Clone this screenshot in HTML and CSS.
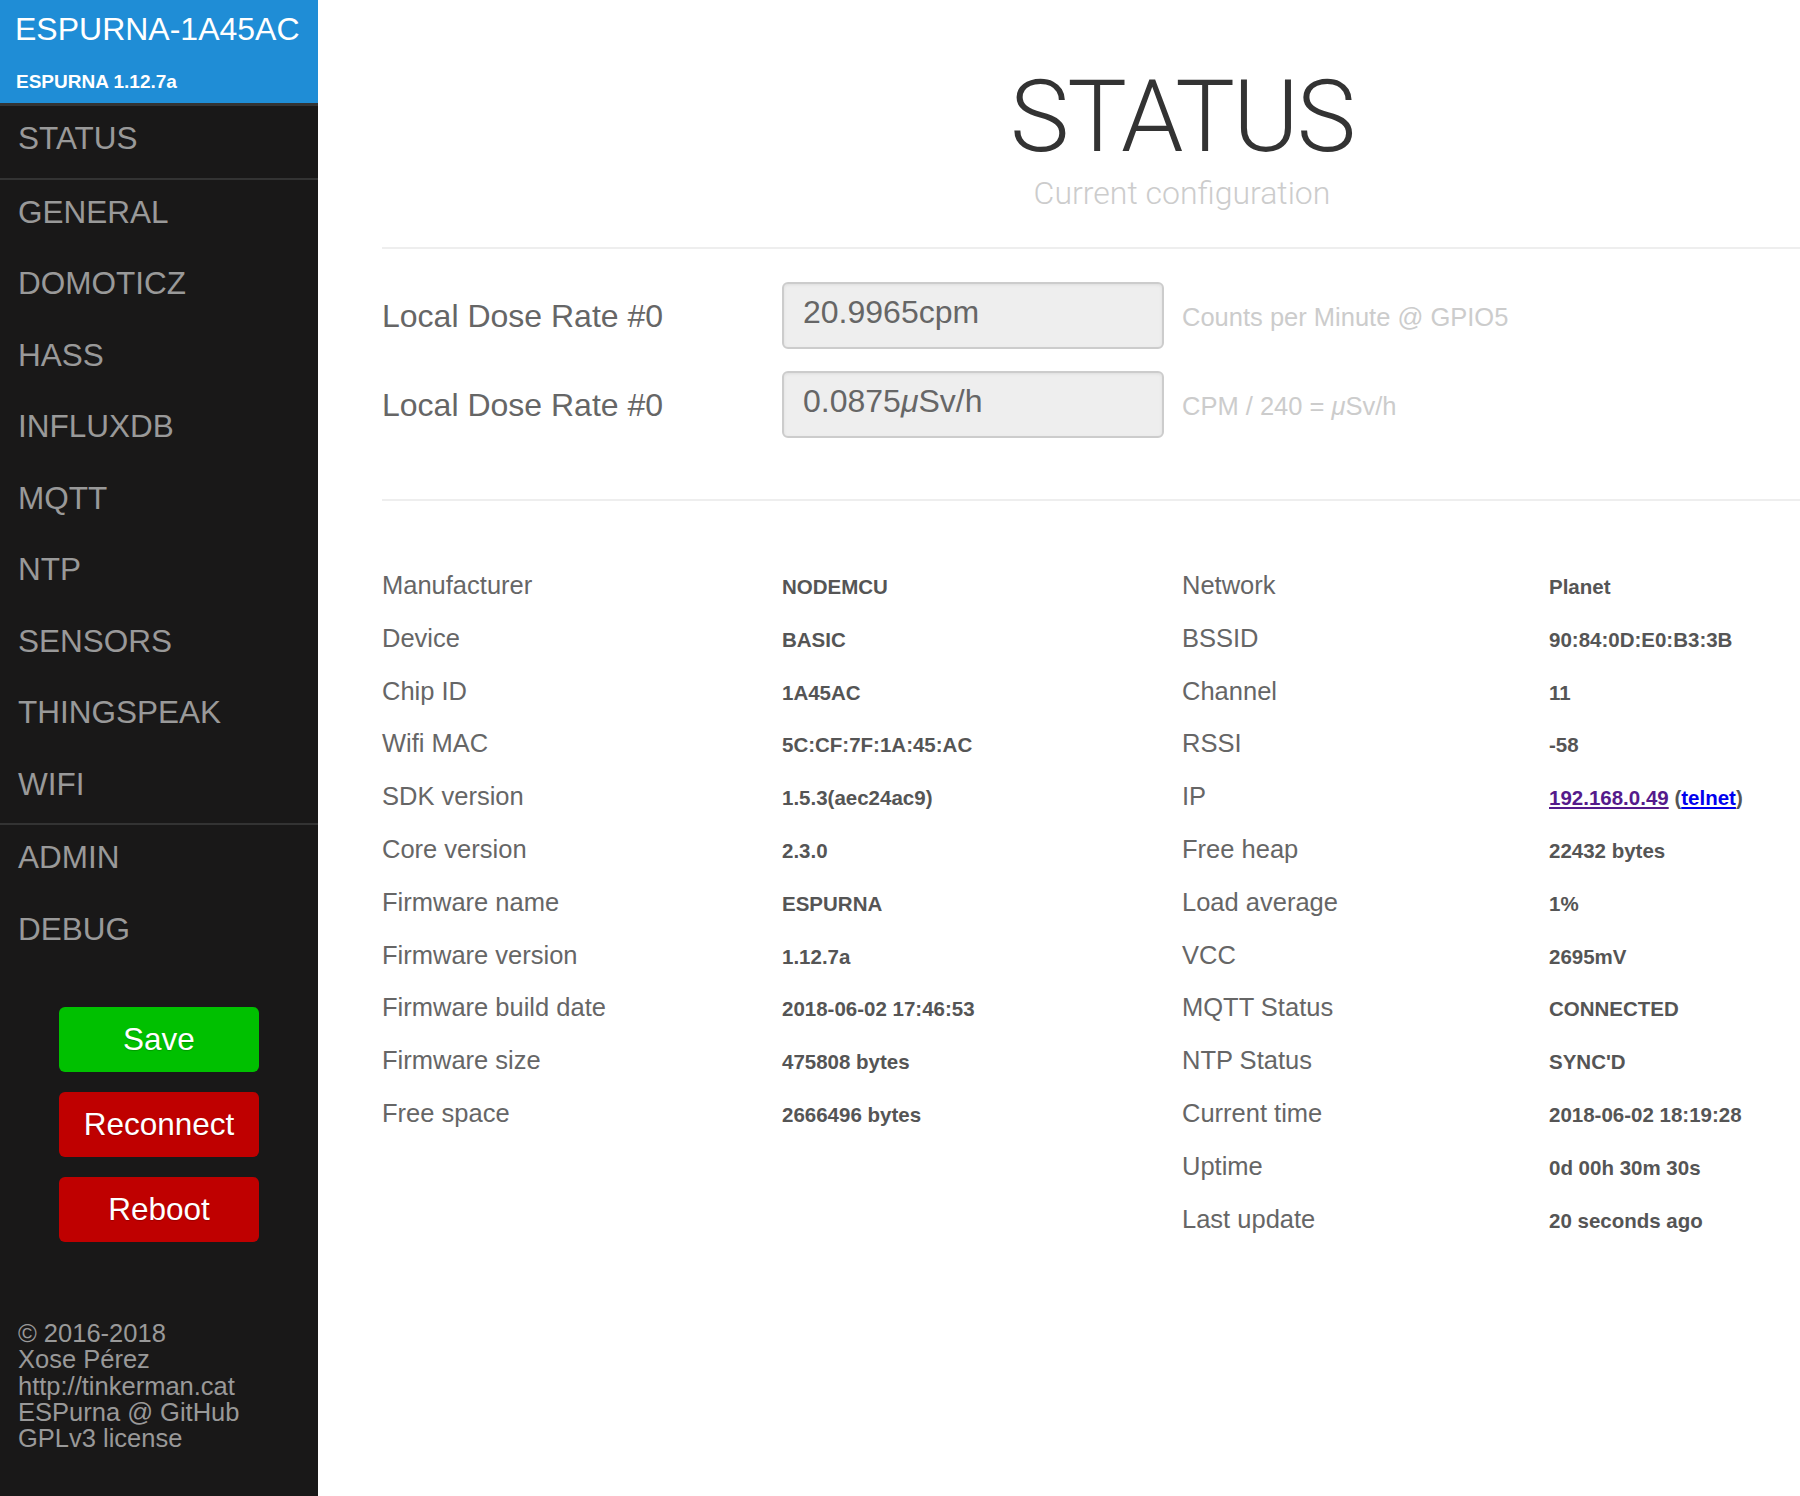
FILE: index.html
```html
<!DOCTYPE html>
<html lang="en">
<head>
<meta charset="utf-8">
<title>ESPurna - STATUS</title>
<link rel="stylesheet" href="styles.css">
</head>
<body>
<div class="layout">
  <aside class="menu">
    <div class="brand">
      <div class="brand-title">ESPURNA-1A45AC</div>
      <div class="brand-sub">ESPURNA 1.12.7a</div>
    </div>
    <ul class="nav">
      <li class="nav-item">STATUS</li>
    </ul>
    <ul class="nav nav-sep">
      <li class="nav-item">GENERAL</li>
      <li class="nav-item">DOMOTICZ</li>
      <li class="nav-item">HASS</li>
      <li class="nav-item">INFLUXDB</li>
      <li class="nav-item">MQTT</li>
      <li class="nav-item">NTP</li>
      <li class="nav-item">SENSORS</li>
      <li class="nav-item">THINGSPEAK</li>
      <li class="nav-item">WIFI</li>
    </ul>
    <ul class="nav nav-sep">
      <li class="nav-item">ADMIN</li>
      <li class="nav-item">DEBUG</li>
    </ul>
    <div class="actions">
      <button class="btn btn-save">Save</button>
      <button class="btn btn-red">Reconnect</button>
      <button class="btn btn-red">Reboot</button>
    </div>
    <div class="footer">
      <div>© 2016-2018</div>
      <div>Xose Pérez</div>
      <div>http://tinkerman.cat</div>
      <div>ESPurna @ GitHub</div>
      <div>GPLv3 license</div>
    </div>
  </aside>
  <main class="main">
    <div class="content">
      <header class="header">
        <h1 class="title">STATUS</h1>
        <h2 class="subtitle">Current configuration</h2>
      </header>
      <hr class="rule">
      <section class="magnitudes">
        <div class="mag-row">
          <label class="mag-label">Local Dose Rate #0</label>
          <div class="mag-input">20.9965cpm</div>
          <span class="mag-hint">Counts per Minute @ GPIO5</span>
        </div>
        <div class="mag-row">
          <label class="mag-label">Local Dose Rate #0</label>
          <div class="mag-input">0.0875<i>μ</i>Sv/h</div>
          <span class="mag-hint">CPM / 240 = <i>μ</i>Sv/h</span>
        </div>
      </section>
      <hr class="rule rule-2">
      <section class="status">
        <div class="status-col status-left">
          <div class="k">Manufacturer</div><div class="v">NODEMCU</div>
          <div class="k">Device</div><div class="v">BASIC</div>
          <div class="k">Chip ID</div><div class="v">1A45AC</div>
          <div class="k">Wifi MAC</div><div class="v">5C:CF:7F:1A:45:AC</div>
          <div class="k">SDK version</div><div class="v">1.5.3(aec24ac9)</div>
          <div class="k">Core version</div><div class="v">2.3.0</div>
          <div class="k">Firmware name</div><div class="v">ESPURNA</div>
          <div class="k">Firmware version</div><div class="v">1.12.7a</div>
          <div class="k">Firmware build date</div><div class="v">2018-06-02 17:46:53</div>
          <div class="k">Firmware size</div><div class="v">475808 bytes</div>
          <div class="k">Free space</div><div class="v">2666496 bytes</div>
        </div>
        <div class="status-col status-right">
          <div class="k">Network</div><div class="v">Planet</div>
          <div class="k">BSSID</div><div class="v">90:84:0D:E0:B3:3B</div>
          <div class="k">Channel</div><div class="v">11</div>
          <div class="k">RSSI</div><div class="v">-58</div>
          <div class="k">IP</div><div class="v"><a class="visited" href="#ip">192.168.0.49</a> (<a class="link" href="#telnet">telnet</a>)</div>
          <div class="k">Free heap</div><div class="v">22432 bytes</div>
          <div class="k">Load average</div><div class="v">1%</div>
          <div class="k">VCC</div><div class="v">2695mV</div>
          <div class="k">MQTT Status</div><div class="v">CONNECTED</div>
          <div class="k">NTP Status</div><div class="v">SYNC'D</div>
          <div class="k">Current time</div><div class="v">2018-06-02 18:19:28</div>
          <div class="k">Uptime</div><div class="v">0d 00h 30m 30s</div>
          <div class="k">Last update</div><div class="v">20 seconds ago</div>
        </div>
      </section>
    </div>
  </main>
</div>
</body>
</html>
```

FILE: styles.css
```css
html, body {
  margin: 0;
  padding: 0;
  background: #fff;
  font-family: "Liberation Sans", Arial, Helvetica, sans-serif;
}

body {
  width: 1800px;
  height: 1496px;
  overflow: hidden;
}

.layout {
  display: flex;
  height: 1496px;
}

/* ---------- sidebar ---------- */
.menu {
  width: 318px;
  flex: 0 0 318px;
  background: #191818;
  display: flex;
  flex-direction: column;
}

.brand {
  background: #1f8dd6;
  height: 92px;
  padding: 11px 15px 0 15px;
  color: #fff;
  border-bottom: 3px solid #333;
}

.brand-title {
  font-size: 32px;
  line-height: 36px;
  white-space: nowrap;
}

.brand-sub {
  margin-top: 24px;
  font-size: 19px;
  line-height: 22px;
  font-weight: bold;
  padding-left: 1px;
}

.nav {
  list-style: none;
  margin: 0;
  padding: 0;
}

.nav-sep {
  border-top: 2px solid #333;
}

.nav-item {
  color: #999;
  font-size: 31.5px;
  line-height: 36px;
  padding: 14px 0 21.5px 18px;
}

.actions {
  margin-top: 39px;
  display: flex;
  flex-direction: column;
  align-items: center;
  gap: 20px;
}

.btn {
  width: 200px;
  height: 65px;
  border: none;
  border-radius: 6px;
  color: #fff;
  font-family: "Liberation Sans", Arial, Helvetica, sans-serif;
  font-size: 31.5px;
  padding: 0;
  text-shadow: 0 1px 1px rgba(0, 0, 0, 0.2);
}

.btn-save {
  background: #00c000;
}

.btn-red {
  background: #bf0000;
}

.footer {
  margin-top: 78px;
  padding-left: 18px;
  color: #999;
  font-size: 25.5px;
  line-height: 26.3px;
}

/* ---------- main ---------- */
.main {
  flex: 1 1 auto;
  overflow: hidden;
}

.content {
  width: 1600px;
  padding-left: 64px;
}

.header {
  text-align: center;
  padding-top: 67px;
}

.title {
  margin: 0;
  font-family: Roboto, "Liberation Sans", sans-serif;
  font-weight: 300;
  font-size: 100px;
  line-height: 100px;
  letter-spacing: -2px;
  color: #333;
}

.subtitle {
  margin: 6px 0 0 0;
  font-family: Roboto, "Liberation Sans", sans-serif;
  font-weight: 300;
  font-size: 32px;
  line-height: 40px;
  color: #ccc;
}

.rule {
  border: none;
  border-top: 2px solid #eee;
  margin: 34px 0 0 0;
  height: 0;
}

.magnitudes {
  padding-top: 33px;
  display: flex;
  flex-direction: column;
  gap: 22px;
}

.mag-row {
  display: grid;
  grid-template-columns: 400px 400px 1fr;
  align-items: center;
}

.mag-label {
  color: #666;
  font-size: 32px;
  line-height: 40px;
}

.mag-input {
  width: 382px;
  height: 67px;
  box-sizing: border-box;
  background: #eee;
  border: 2px solid #ccc;
  border-radius: 6px;
  box-shadow: inset 0 1px 3px #ddd;
  color: #666;
  font-size: 32px;
  line-height: 56px;
  padding: 0 19px;
}

.mag-hint {
  color: #ccc;
  font-size: 25.5px;
  line-height: 40px;
  padding-top: 3px;
}

.rule-2 {
  margin-top: 61px;
}

.status {
  display: grid;
  grid-template-columns: 800px 1fr;
  padding-top: 58px;
}

.status-col {
  display: grid;
  align-items: baseline;
  grid-auto-rows: 52.8px;
}

.status-left {
  grid-template-columns: 400px 1fr;
}

.status-right {
  grid-template-columns: 367px 1fr;
}

.k {
  color: #666;
  font-size: 25.5px;
  line-height: 52.8px;
}

.v {
  color: #555;
  font-size: 20.5px;
  font-weight: bold;
  line-height: 52.8px;
}

.visited {
  color: #551a8b;
}

.link {
  color: #0000ee;
}
```
